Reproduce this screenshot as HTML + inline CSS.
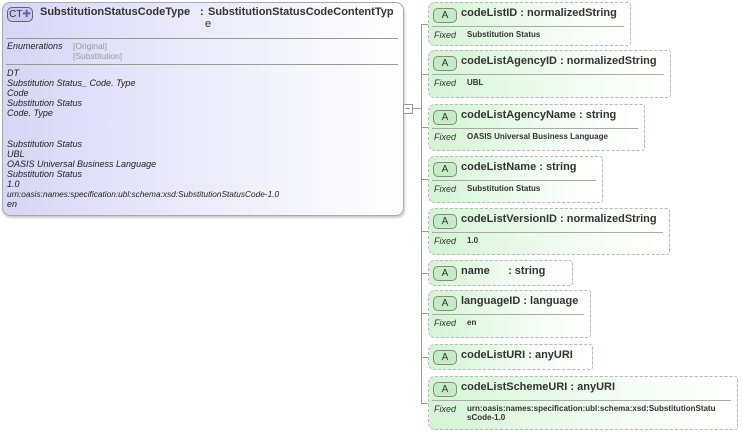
<!DOCTYPE html><html><head><style>
body{margin:0;width:742px;height:435px;background:#fff;position:relative;font-family:"Liberation Sans",sans-serif;overflow:hidden}
.ct{position:absolute;left:2px;top:2px;width:400px;height:212px;border:1px solid #a8a8b8;border-radius:8px;background:linear-gradient(90deg,#d6d6f6,#f4f4fc 70%,#fff);box-shadow:1px 2px 2px #ccc}
.t{position:absolute;font-size:11px;font-weight:bold;color:#333}
.i{position:absolute;font-size:9px;font-style:italic;color:#222;line-height:10.1px}
.g{position:absolute;font-size:8.5px;color:#999;line-height:10px}
.hl{position:absolute;height:1px;background:#999}
.b{position:absolute;border:1px dashed #b8b8b8;border-radius:7px 3px 3px 7px;background:linear-gradient(90deg,#d4f4d4,#f3fcf3 60%,#fff);box-sizing:border-box}
.a{position:absolute;left:4px;top:5px;width:22px;height:13px;border:1px solid #888;border-radius:5px;background:#c6ecc6;font-size:10px;text-align:center;line-height:13px;color:#333}
.n{position:absolute;left:32px;top:4px;font-size:11px;font-weight:bold;color:#333;white-space:nowrap}
.s{position:absolute;left:3px;right:6px;top:23px;height:1px;background:#aaa}
.f{position:absolute;left:5px;top:27px;font-size:9px;font-style:italic;color:#333}
.v{position:absolute;left:38px;top:27px;font-size:8px;font-weight:bold;color:#333;line-height:9px}
.l{position:absolute;background:#999}
</style></head><body>
<div class="ct"></div>
<div style="position:absolute;left:7px;top:7px;width:24px;height:13px;border:1px solid #666;border-radius:5px;background:#c8c8f0;font-size:10px;line-height:13px;color:#333;text-align:center">CT<span style="color:#5566aa">✚</span></div>
<div class="t" style="left:40px;top:6px">SubstitutionStatusCodeType</div>
<div class="t" style="left:200px;top:6px">:</div>
<div class="t" style="left:208px;top:6px">SubstitutionStatusCodeContentTyp</div>
<div class="t" style="left:205px;top:18px;font-weight:normal">e</div>
<div class="hl" style="left:6px;top:38px;width:392px"></div>
<div class="i" style="left:7px;top:41px">Enumerations</div>
<div class="g" style="left:73px;top:41px">[Original]<br>[Substitution]</div>
<div class="hl" style="left:6px;top:64px;width:392px"></div>
<div class="i" style="left:7px;top:68px">DT<br>Substitution Status_ Code. Type<br>Code<br>Substitution Status<br>Code. Type<br><br><br>Substitution Status<br>UBL<br>OASIS Universal Business Language<br>Substitution Status<br>1.0<br><span style="font-size:8.3px">urn:oasis:names:specification:ubl:schema:xsd:SubstitutionStatusCode-1.0</span><br>en</div>
<div class="l" style="left:404px;top:108px;width:6px;height:1px"></div>
<div style="position:absolute;left:403px;top:104px;width:8px;height:8px;border:1px solid #999;background:#fff"></div>
<div class="l" style="left:405px;top:108px;width:5px;height:1px"></div>
<div class="l" style="left:412px;top:108px;width:9px;height:1px"></div>
<div class="l" style="left:421px;top:24px;width:1px;height:380px"></div>

<div class="l" style="left:421px;top:24px;width:8px;height:1px"></div>
<div class="b" style="left:428px;top:2px;width:203px;height:44px"><div class="a">A</div><div class="n">codeListID : normalizedString</div><div class="s"></div><div class="f">Fixed</div><div class="v">Substitution Status</div></div>
<div class="l" style="left:421px;top:74px;width:8px;height:1px"></div>
<div class="b" style="left:428px;top:50px;width:243px;height:48px"><div class="a">A</div><div class="n">codeListAgencyID : normalizedString</div><div class="s"></div><div class="f">Fixed</div><div class="v">UBL</div></div>
<div class="l" style="left:421px;top:127px;width:8px;height:1px"></div>
<div class="b" style="left:428px;top:104px;width:217px;height:47px"><div class="a">A</div><div class="n">codeListAgencyName : string</div><div class="s"></div><div class="f">Fixed</div><div class="v">OASIS Universal Business Language</div></div>
<div class="l" style="left:421px;top:179px;width:8px;height:1px"></div>
<div class="b" style="left:428px;top:156px;width:175px;height:47px"><div class="a">A</div><div class="n">codeListName : string</div><div class="s"></div><div class="f">Fixed</div><div class="v">Substitution Status</div></div>
<div class="l" style="left:421px;top:231px;width:8px;height:1px"></div>
<div class="b" style="left:428px;top:208px;width:242px;height:47px"><div class="a">A</div><div class="n">codeListVersionID : normalizedString</div><div class="s"></div><div class="f">Fixed</div><div class="v">1.0</div></div>
<div class="l" style="left:421px;top:273px;width:8px;height:1px"></div>
<div class="b" style="left:428px;top:260px;width:145px;height:26px"><div class="a">A</div><div class="n">name &nbsp; &nbsp; &nbsp;: string</div></div>
<div class="l" style="left:421px;top:313px;width:8px;height:1px"></div>
<div class="b" style="left:428px;top:290px;width:163px;height:48px"><div class="a">A</div><div class="n">languageID : language</div><div class="s"></div><div class="f">Fixed</div><div class="v">en</div></div>
<div class="l" style="left:421px;top:357px;width:8px;height:1px"></div>
<div class="b" style="left:428px;top:344px;width:165px;height:26px"><div class="a">A</div><div class="n">codeListURI : anyURI</div></div>
<div class="l" style="left:421px;top:403px;width:8px;height:1px"></div>
<div class="b" style="left:428px;top:376px;width:310px;height:54px"><div class="a">A</div><div class="n">codeListSchemeURI : anyURI</div><div class="s"></div><div class="f">Fixed</div><div class="v">urn:oasis:names:specification:ubl:schema:xsd:SubstitutionStatu<br>sCode-1.0</div></div>
</body></html>
